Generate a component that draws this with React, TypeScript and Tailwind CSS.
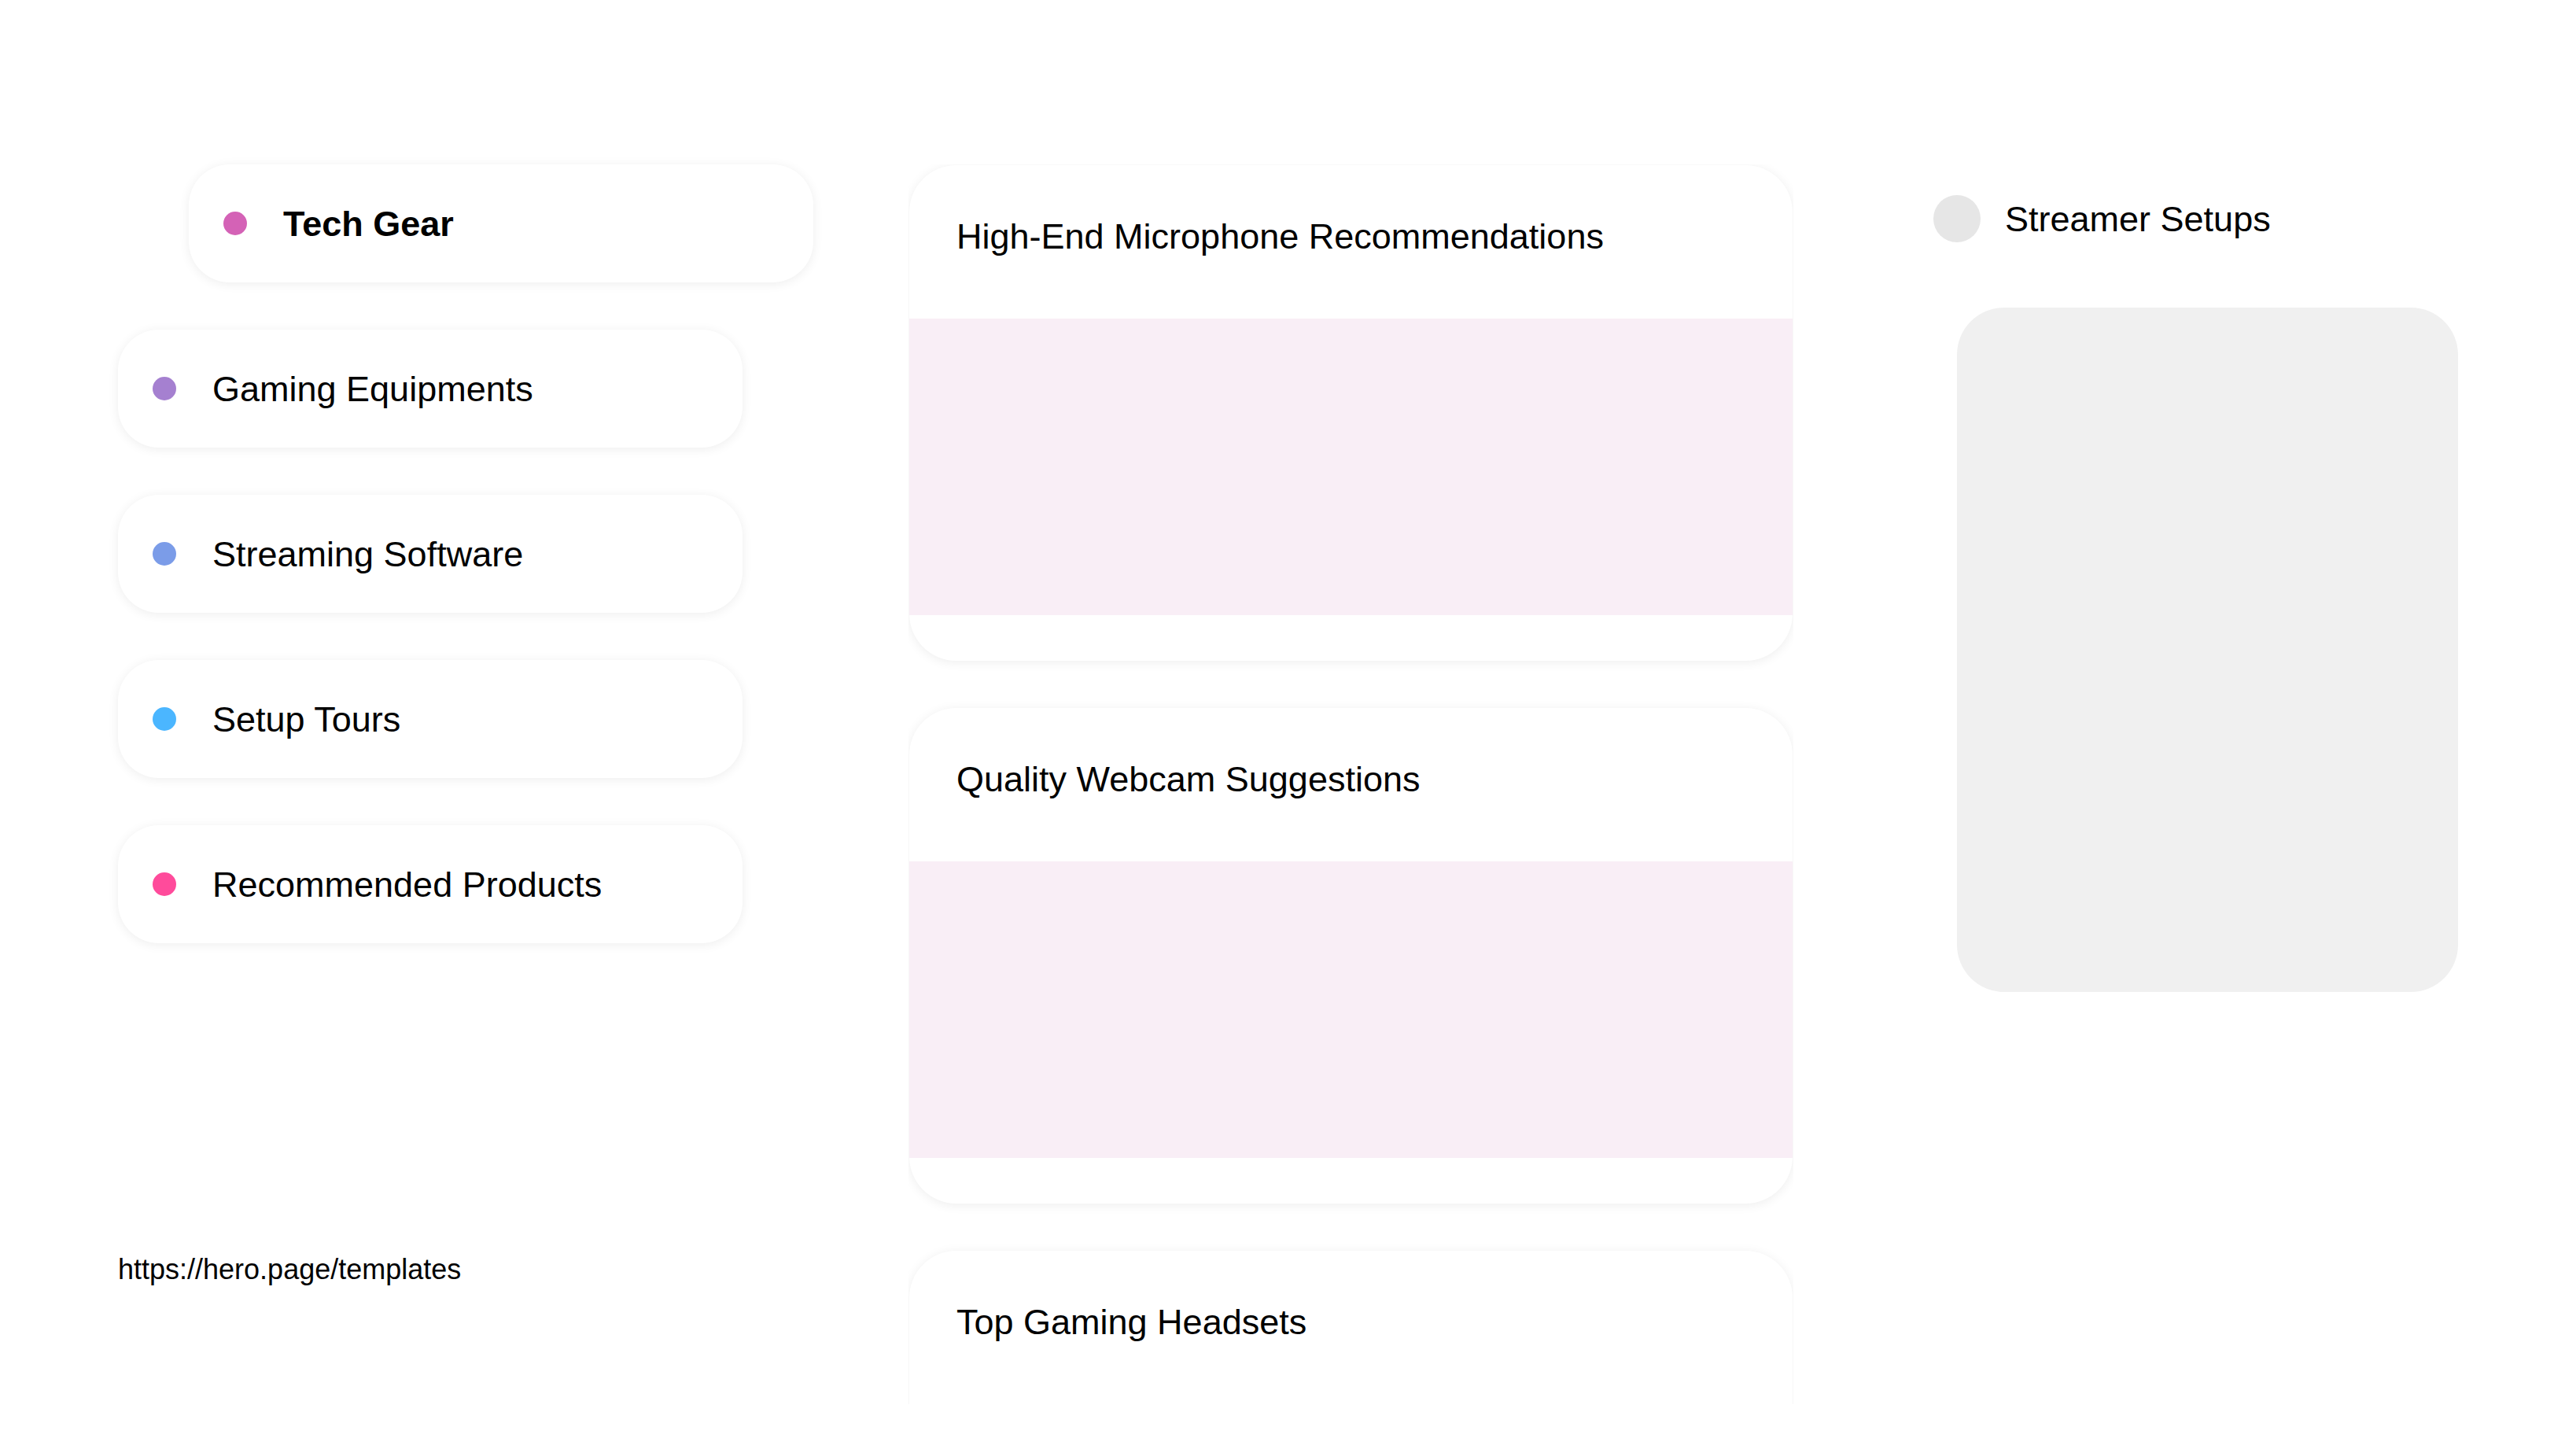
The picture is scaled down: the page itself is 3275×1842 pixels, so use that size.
import React from 'react';

interface Category {
  label: string;
  dot: string;
  active?: boolean;
}

const categories: Category[] = [
  { label: 'Tech Gear', dot: 'bg-[#d462b6]', active: true },
  { label: 'Gaming Equipments', dot: 'bg-[#a580d0]' },
  { label: 'Streaming Software', dot: 'bg-[#7b9ce8]' },
  { label: 'Setup Tours', dot: 'bg-[#4bb6ff]' },
  { label: 'Recommended Products', dot: 'bg-[#ff4b9b]' },
];

const posts = [
  'High-End Microphone Recommendations',
  'Quality Webcam Suggestions',
  'Top Gaming Headsets',
];

const CategoryPill: React.FC<{ item: Category }> = ({ item }) => (
  <div
    className={`flex items-center h-[150px] w-[794px] rounded-[52px] bg-white pl-[44px] shadow-[0_2px_14px_rgba(0,0,0,0.07)] ${
      item.active ? 'ml-[90px]' : ''
    }`}
  >
    <span className={`w-[30px] h-[30px] rounded-full shrink-0 ${item.dot}`} />
    <span className={`ml-[46px] text-[45px] leading-none text-black ${item.active ? 'font-bold' : ''}`}>
      {item.label}
    </span>
  </div>
);

const PostCard: React.FC<{ title: string }> = ({ title }) => (
  <div className="shrink-0 h-[630px] rounded-[60px] bg-white overflow-hidden shadow-[0_2px_14px_rgba(0,0,0,0.07)]">
    <div className="h-[195px] pt-[65px] pl-[60px]">
      <h2 className="text-[45px] leading-[1.15] text-black font-normal">{title}</h2>
    </div>
    <div className="h-[377px] bg-[#f9eef6]" />
  </div>
);

export default function App() {
  return (
    <div
      className="h-[1842px] w-[3275px] overflow-hidden bg-white flex px-[150px] pt-[209px]"
      style={{ fontFamily: '"Liberation Sans", Arial, sans-serif' }}
    >
      {/* Categories */}
      <div className="w-[885px] shrink-0 flex flex-col">
        <div className="flex flex-col gap-[60px]">
          {categories.map((c) => (
            <CategoryPill key={c.label} item={c} />
          ))}
        </div>
        <a className="mt-[394px] text-[36px] leading-[1.15] text-black">https://hero.page/templates</a>
      </div>

      {/* Posts */}
      <div className="ml-[120px] w-[1125px] shrink-0 h-[1576px] overflow-hidden">
        <div className="flex flex-col gap-[60px] px-[1px] pt-[1px]">
          {posts.map((p) => (
            <PostCard key={p} title={p} />
          ))}
        </div>
      </div>

      {/* Featured */}
      <div className="ml-[178px] flex-1 flex flex-col">
        <div className="flex items-center mt-[39px]">
          <span className="w-[60px] h-[60px] rounded-full bg-[#e6e6e6] shrink-0" />
          <span className="ml-[31px] text-[45px] leading-none text-black">Streamer Setups</span>
        </div>
        <div className="mt-[83px] ml-[30px] h-[870px] rounded-[60px] bg-[#f0f0f0]" />
      </div>
    </div>
  );
}
